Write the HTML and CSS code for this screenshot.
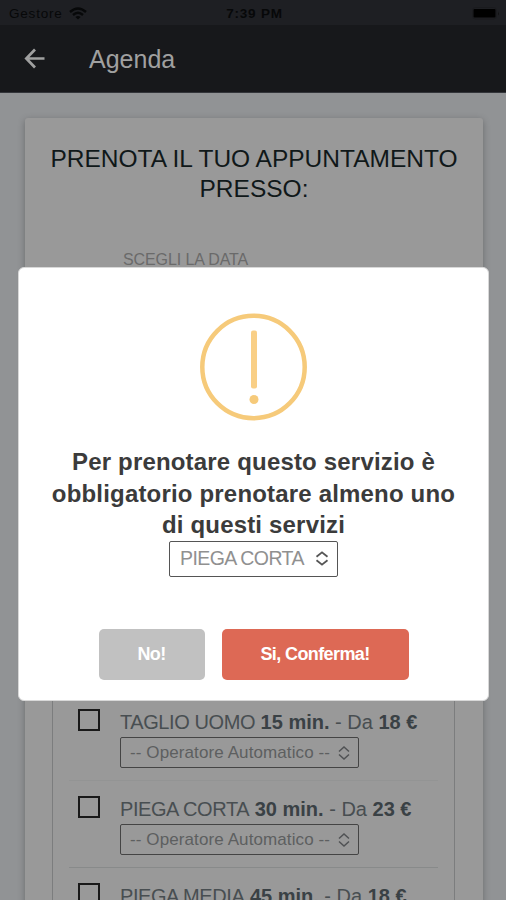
FILE: index.html
```html
<!DOCTYPE html>
<html lang="it">
<head>
<meta charset="utf-8">
<title>Agenda</title>
<link rel="stylesheet" href="styles.css">
</head>
<body>
<div class="screen">
  <div class="status">
    <div class="carrier"><span>Gestore</span>
      <svg class="wifi" width="18" height="13" viewBox="0 0 18 13" fill="none" stroke="#070809" stroke-width="2.4"><path d="M1 5Q9-2 17 5M4 8Q9 3.600 14 8"/><path d="M9 12.500L6.400 10Q9 7.800 11.600 10Z" fill="#070809" stroke="none"/></svg>
    </div>
    <div class="clock">7:39 PM</div>
    <div class="power"><svg width="28" height="13" viewBox="0 0 28 13"><rect x=".5" y=".5" width="24" height="11.500" rx="3" fill="none" stroke="#1a1b1e"/><rect x="1.500" y="2" width="22" height="8.500" rx="1" fill="#000"/><path d="M26 4.500q1.500 2 0 4" fill="#111"/></svg></div>
  </div>
  <header class="bar">
    <svg class="back" width="22" height="22" viewBox="0 0 22 22" fill="none" stroke="#a0a0a0" stroke-width="2.700"><path d="M11 1.500L2.300 10.500L11 19.500M2.500 10.500H20.500"/></svg>
    <h1>Agenda</h1>
  </header>
  <main class="card">
    <h2>PRENOTA IL TUO APPUNTAMENTO PRESSO:</h2>
    <div class="date">SCEGLI LA DATA</div>
    <ul class="services">
      <li><span class="check"></span><div class="info"><div class="name"><span class="thin">TAGLIO UOMO</span> <b>15 min.</b> - Da <b>18 €</b></div>
        <div class="select"><span>-- Operatore Automatico --</span><svg width="12" height="14" viewBox="0 0 12 14" fill="none" stroke="#505254" stroke-width="1.500"><path d="M1 5.500L6 1L11 5.500M1 8.500L6 13L11 8.500"/></svg></div></div></li>
      <li><span class="check"></span><div class="info"><div class="name"><span class="thin">PIEGA CORTA</span> <b>30 min.</b> - Da <b>23 €</b></div>
        <div class="select"><span>-- Operatore Automatico --</span><svg width="12" height="14" viewBox="0 0 12 14" fill="none" stroke="#505254" stroke-width="1.500"><path d="M1 5.500L6 1L11 5.500M1 8.500L6 13L11 8.500"/></svg></div></div></li>
      <li><span class="check"></span><div class="info"><div class="name"><span class="thin">PIEGA MEDIA</span> <b>45 min.</b> - Da <b>18 €</b></div></div></li>
    </ul>
  </main>
  <div class="modal" role="dialog">
    <svg class="warn" width="108" height="108" viewBox="0 0 108 108"><circle cx="53.500" cy="54" r="51.200" fill="none" stroke="#f6ca7a" stroke-width="4.500"/><rect x="51" y="17.500" width="6" height="58" rx="2" fill="#f9cf86"/><circle cx="54" cy="86.500" r="4.500" fill="#f6ca7a"/></svg>
    <h3>Per prenotare questo servizio è<br>obbligatorio prenotare almeno uno<br>di questi servizi</h3>
    <div class="choice"><span>PIEGA CORTA</span><svg width="14" height="15" viewBox="0 0 14 15" fill="none" stroke="#555" stroke-width="1.800"><path d="M1.500 5.800L7 1.300L12.500 5.800M1.500 9.200L7 13.700L12.500 9.200"/></svg></div>
    <div class="actions"><button class="no">No!</button><button class="yes">Si, Conferma!</button></div>
  </div>
</div>
</body>
</html>
```
FILE: styles.css
```css
* { box-sizing: border-box; }
body { margin: 0; font-family: "Liberation Sans", Arial, sans-serif; }
h1, h2, h3, ul { margin: 0; padding: 0; font-weight: 400; }
.screen { position: relative; width: 506px; height: 900px; overflow: hidden; background: #919395; }
.status { height: 25px; background: #1e1f23; display: grid; grid-template-columns: 1fr auto 1fr; align-items: center; padding: 2px 6px 0 9px; font-size: 13.500px; color: #070809; }
.carrier { display: flex; align-items: center; gap: 6px; letter-spacing: .8px; }
.wifi { margin-top: -1px; }
.clock { font-weight: 700; letter-spacing: .8px; }
.power { display: flex; justify-content: flex-end; }
.bar { height: 68px; background: #17181b; border-bottom: 1px solid #33353a; display: flex; align-items: center; padding-left: 24px; }
.back { margin-right: 43px; }
.bar h1 { font-size: 25px; line-height: 30px; color: #a0a0a0; }
.card { width: 458px; height: 800px; margin: 25px 0 0 25px; padding: 26px 0 0; background: #999; border-radius: 3px; box-shadow: 0 2px 7px rgba(0, 0, 0, .28); }
.card h2 { font-size: 24.500px; line-height: 30px; text-align: center; color: #101819; padding: 0 15px; }
.date { margin: 46px 0 0 98px; font-size: 16px; line-height: 20px; letter-spacing: -.1px; color: #6a6a6a; }
.services { list-style: none; width: 403px; height: 600px; margin: 68px 0 0 27px; padding: 355px 16px 0; border: 1px solid #7c7d7e; }
.services li { display: flex; height: 87px; padding-left: 9px; border-bottom: 1px solid #888a8a; }
.services li:first-child { border-color: #939494; }
.check { width: 22px; height: 22px; margin: 15px 20px 0 0; border: 2px solid #191919; flex: none; }
.name { margin-top: 16px; font-size: 20px; line-height: 24px; white-space: nowrap; color: #484e51; }
.name b { color: #3a4145; }
.thin { letter-spacing: -.42px; }
.select { width: 239px; height: 31px; margin-top: 3px; padding: 0 8px 0 9px; display: flex; align-items: center; justify-content: space-between; border: 1.500px solid #444; border-radius: 2px; font-size: 17px; letter-spacing: .1px; color: #5d5f60; white-space: nowrap; }
.modal { position: absolute; left: 18px; top: 267px; width: 471px; height: 434px; background: #fff; border: 1px solid #d8d8d8; border-radius: 6px; display: flex; flex-direction: column; align-items: center; }
.warn { margin-top: 45px; }
.modal h3 { margin-top: 25px; font-size: 24px; line-height: 31.500px; font-weight: 700; text-align: center; letter-spacing: .18px; color: #3b3b3b; white-space: nowrap; }
.choice { width: 169px; height: 36px; display: flex; align-items: center; justify-content: space-between; padding: 0 8px 0 10px; border: 1.500px solid #555; border-radius: 2px; font-size: 20px; letter-spacing: -.95px; color: #909090; white-space: nowrap; }
.choice span { font-size: 19.500px; letter-spacing: -.6px; }
.actions { display: flex; gap: 17px; margin-top: 52px; }
.actions button { height: 51px; padding: 1px 0 0; border: 0; border-radius: 5px; color: #fff; font: 700 18px "Liberation Sans", Arial, sans-serif; letter-spacing: -.6px; }
.actions .no { width: 106px; background: #c1c1c1; }
.actions .yes { width: 187px; background: #dd6955; }
```
